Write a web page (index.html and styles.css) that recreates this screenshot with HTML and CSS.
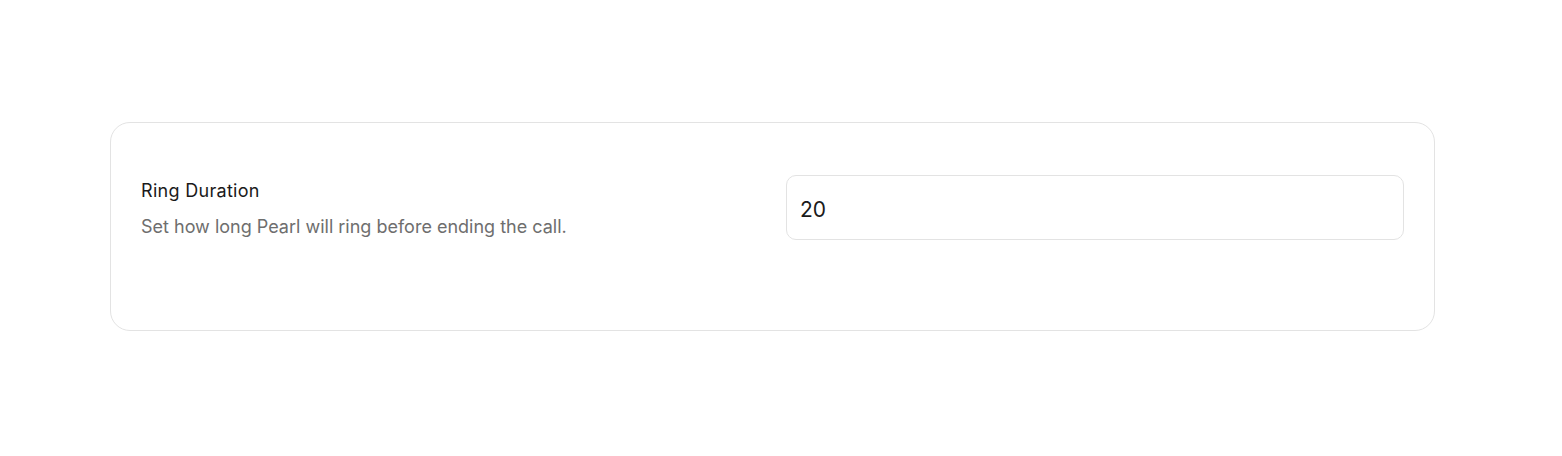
FILE: index.html
```html
<!DOCTYPE html>
<html>
<head>
<meta charset="utf-8">
<link rel="stylesheet" href="styles.css">
</head>
<body>
<div class="page">
  <section class="card">
    <div class="row">
      <div class="info">
        <div class="label">Ring Duration</div>
        <div class="desc">Set how long Pearl will ring before ending the call.</div>
      </div>
      <div class="field">
        <input class="input" type="text" value="20">
      </div>
    </div>
  </section>
</div>
</body>
</html>
```
FILE: styles.css
```css
* { box-sizing: border-box; }
html, body { margin: 0; padding: 0; background: #ffffff; }
body { font-family: Inter, "Liberation Sans", sans-serif; color: #1a1a1a; }
.page { padding: 122px 0 0 110px; }
.card {
  width: 1325px;
  height: 209px;
  border: 1.5px solid #e3e3e3;
  border-radius: 20px;
  padding: 52px 30px 0 30px;
}
.row {
  display: grid;
  grid-template-columns: 1fr 1fr;
  column-gap: 27px;
  align-items: start;
}
.info { padding-top: 5px; }
.label {
  font-size: 18px;
  line-height: 22px;
  color: #1a1a1a;
  letter-spacing: 0.3px;
}
.desc {
  margin-top: 13px;
  font-size: 18px;
  line-height: 24px;
  color: #6e6e6e;
}
.input {
  width: 100%;
  height: 65px;
  border: 1.5px solid #e3e3e3;
  border-radius: 10px;
  padding: 4px 13px 0 13px;
  font-family: Inter, "Liberation Sans", sans-serif;
  font-size: 21px;
  color: #1a1a1a;
  outline: none;
  background: #fff;
}
```
